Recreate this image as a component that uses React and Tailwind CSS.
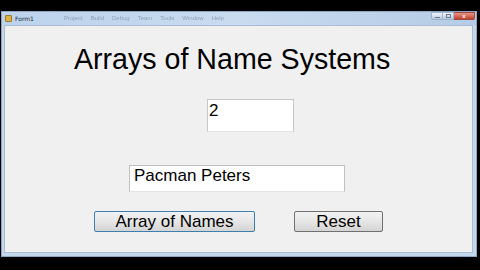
export default function App() {
  const sans = { fontFamily: '"Liberation Sans", Arial, sans-serif' };
  return (
    <div className="w-[480px] h-[270px] bg-black overflow-hidden" style={sans}>
      <div className="pt-[11px] pl-[1px]">
        <div className="w-[476px] h-[246px] bg-[#c3d7ed] border border-[#8ea6c2] flex flex-col">
          {/* title bar */}
          <div className="h-[13px] flex items-center bg-gradient-to-r from-[#bcd3ec] via-[#c8dbef] to-[#b5cce6]">
            <div className="ml-[3px] w-[7px] h-[7px] bg-[#e0b040] rounded-[1px] border border-[#9a7a30]"></div>
            <span className="ml-[3px] text-[6px] leading-[6px] text-[#1e2a3a]" style={{ fontFamily: '"DejaVu Sans", sans-serif' }}>Form1</span>
            <div className="ml-[30px] flex gap-[8px] text-[6px] text-[#3a4a60] opacity-40 blur-[0.7px]">
              <span>Project</span><span>Build</span><span>Debug</span><span>Team</span><span>Tools</span><span>Window</span><span>Help</span>
            </div>
            <div className="ml-auto mr-[1px] flex self-start">
              <div className="w-[12px] h-[8px] bg-gradient-to-b from-[#f2f6fb] to-[#b8c9de] border border-[#9fb2ca] rounded-bl-[2px] flex items-end justify-center pb-[1px]">
                <div className="w-[5px] h-[1px] bg-[#6a7a90]"></div>
              </div>
              <div className="w-[11px] h-[8px] bg-gradient-to-b from-[#f2f6fb] to-[#b8c9de] border-y border-r border-[#9fb2ca] flex items-center justify-center">
                <div className="w-[5px] h-[4px] border border-[#6a7a90]"></div>
              </div>
              <div className="w-[21px] h-[8px] bg-gradient-to-b from-[#e99484] to-[#c43c2c] border-y border-r border-[#9a4a40] rounded-br-[2px] flex items-center justify-center text-white text-[6px] leading-[6px] font-bold">x</div>
            </div>
          </div>
          {/* client */}
          <div className="ml-[2px] w-[469px] h-[228px] bg-[#f0f0f0] border border-[#a9bcd3] text-black">
            <div className="ml-[69px] mt-[19px] text-[28.6px] leading-[28px] whitespace-nowrap">Arrays of Name Systems</div>
            <div className="ml-[202px] mt-[26px] w-[87px] h-[33px] bg-white border border-[#c8c8c8] border-b-[#e4e4e4] pl-[1px] pt-[1px] text-[17px] leading-[20px]">2</div>
            <div className="ml-[124px] mt-[33px] w-[216px] h-[27px] bg-white border border-[#c0c0c0] border-b-[#e4e4e4] pl-[4px] text-[17px] leading-[20px] whitespace-nowrap">Pacman Peters</div>
            <div className="ml-[89px] mt-[19px] flex gap-[39px]">
              <div className="w-[161px] h-[21px] border border-[#3c7fb1] rounded-[2px] bg-gradient-to-b from-[#f2f2f2] via-[#e6e6e6] to-[#d4d4d4] flex items-center justify-center text-[17px] leading-[21px]">Array of Names</div>
              <div className="w-[89px] h-[21px] border border-[#707070] rounded-[2px] bg-gradient-to-b from-[#f2f2f2] via-[#e6e6e6] to-[#d4d4d4] flex items-center justify-center text-[17px] leading-[21px]">Reset</div>
            </div>
          </div>
        </div>
      </div>
    </div>
  );
}
